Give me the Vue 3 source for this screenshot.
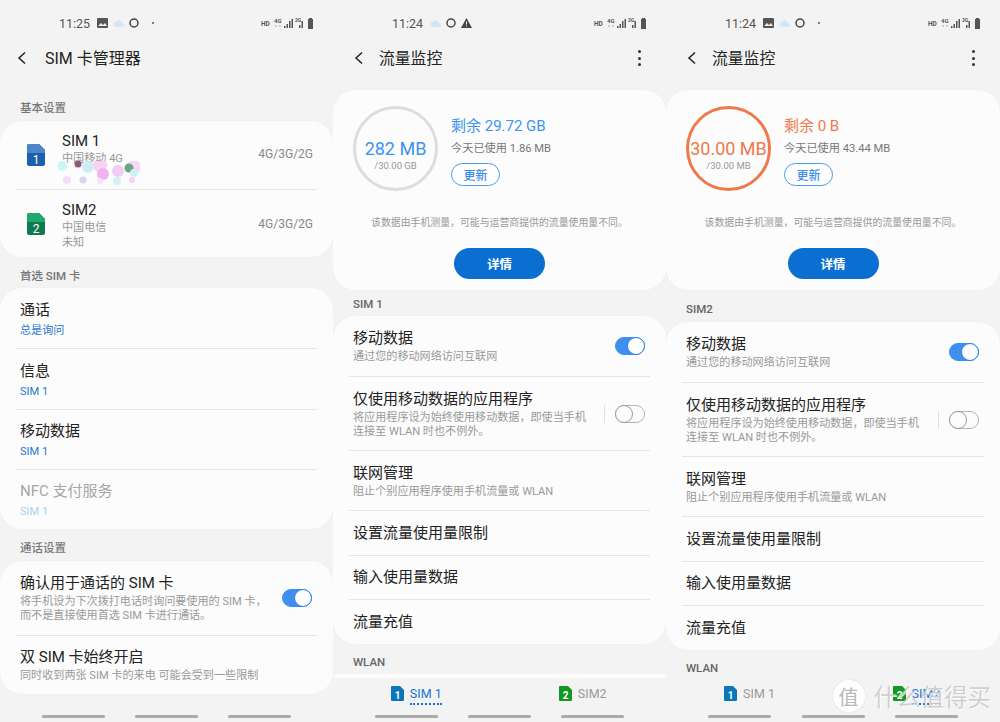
<script setup>
const monitors = [
  {
    time: '11:24', warn: true, sim: 'SIM 1', tall: false, used: '282 MB', total: '/30.00 GB',
    left: '剩余 29.72 GB', today: '今天已使用 1.86 MB', over: false, activeTab: 0
  },
  {
    time: '11:24', warn: false, sim: 'SIM2', tall: true, used: '30.00 MB', total: '/30.00 MB',
    left: '剩余 0 B', today: '今天已使用 43.44 MB', over: true, activeTab: 1
  }
]

const preferred = [
  { title: '通话', sub: '总是询问' },
  { title: '信息', sub: 'SIM 1' },
  { title: '移动数据', sub: 'SIM 1' },
  { title: 'NFC 支付服务', sub: 'SIM 1', disabled: true }
]

const blobs = [
  { cx: 4, cy: 5, r: 5, fill: '#c9f5f7' }, { cx: 30, cy: 6, r: 6, fill: '#cdeef5' },
  { cx: 20, cy: 3, r: 3.500, fill: '#8d5a78' }, { cx: 42, cy: 4, r: 7, fill: '#fbd0f3' },
  { cx: 45, cy: 13, r: 6, fill: '#eeb6f0' }, { cx: 60, cy: 10, r: 6, fill: '#f0ccf2' },
  { cx: 76, cy: 6, r: 7, fill: '#fbd6f5' }, { cx: 71, cy: 7, r: 4.500, fill: '#6ba583' },
  { cx: 76, cy: 12, r: 4, fill: '#cbf2f5' }, { cx: 9, cy: 19, r: 4, fill: '#fbdcf5' },
  { cx: 25, cy: 19, r: 3.500, fill: '#d5d5f5' }, { cx: 42, cy: 20, r: 3, fill: '#f3e4f5' },
  { cx: 59, cy: 20, r: 4, fill: '#d3f0f5' }, { cx: 74, cy: 19, r: 3, fill: '#f9d0f0' }
]
</script>

<template>
  <div class="screen">
    <section class="phone">
      <div class="status">
        <span class="time">11:25</span>
        <svg class="ico" width="11" height="10" viewBox="0 0 11 10"><rect width="11" height="10" rx="1" fill="#555" /><path d="M1 8l3-3 2 2 2-2 2 3z" fill="#eee" /></svg>
        <svg class="ico" width="11" height="7" viewBox="0 0 11 7"><path d="M3 7a2.5 2.5 0 0 1 0-5 3.2 3.2 0 0 1 6 1.200a1.900 1.900 0 0 1 0 3.800z" fill="#d3e6f5" /></svg>
        <svg class="ico" width="10" height="10" viewBox="0 0 10 10"><circle cx="5" cy="5" r="4" fill="none" stroke="#444" stroke-width="1.500" /></svg>
        <i class="dot"></i>
        <svg class="signals" width="55" height="14" viewBox="0 0 55 14">
          <text x="0" y="9.500" font-size="6.500" font-weight="700" fill="#555" font-family="Roboto">HD</text>
          <text x="13" y="6.500" font-size="6" font-weight="700" fill="#555" font-family="Roboto">4G</text>
          <path d="M14 10h2M18 10h2" stroke="#aaa" />
          <path d="M23 12h1.500v-2H23zM25.500 12H27V8h-1.500zM28 12h1.500V5H28zM30.500 12H32V3h-1.500z" fill="#555" />
          <text x="34" y="6" font-size="5" font-weight="700" fill="#555" font-family="Roboto">2G</text>
          <path d="M38 12h1.500V9H38zM40.500 12H42V5h-1.500z" fill="#555" />
          <path d="M47 3h1V2h3v1h1v10h-5z" fill="#555" />
        </svg>
      </div>
      <div class="header">
        <svg class="back" width="10" height="14" viewBox="0 0 10 14"><path d="M8 1.500L2 7l6 5.500" fill="none" stroke="#222" stroke-width="1.500" /></svg>
        <h1 class="title">SIM 卡管理器</h1>
      </div>

      <h2 class="section first">基本设置</h2>
      <div class="card">
        <div class="sim-row">
          <svg class="sim-icon" width="18" height="22" viewBox="0 0 18 22"><path d="M2 0h10l6 6v14a2 2 0 0 1-2 2H2a2 2 0 0 1-2-2V2a2 2 0 0 1 2-2z" fill="#1b5fae" /><path d="M2 0h10l6 6v3H0V2a2 2 0 0 1 2-2z" fill="#4a86c8" /><text x="9" y="19.500" text-anchor="middle" font-size="12" fill="#fff" font-family="Roboto">1</text></svg>
          <div class="sim-text">
            <div class="row-title">SIM 1</div>
            <div class="row-sub">中国移动 4G</div>
          </div>
          <span class="sim-net">4G/3G/2G</span>
          <svg class="blobs" width="82" height="24" viewBox="0 0 82 24"><circle v-for="(b, i) in blobs" :key="i" :cx="b.cx" :cy="b.cy" :r="b.r" :fill="b.fill" /></svg>
        </div>
        <div class="sim-row">
          <svg class="sim-icon" width="18" height="22" viewBox="0 0 18 22"><path d="M2 0h10l6 6v14a2 2 0 0 1-2 2H2a2 2 0 0 1-2-2V2a2 2 0 0 1 2-2z" fill="#0f7a50" /><path d="M2 0h10l6 6v3H0V2a2 2 0 0 1 2-2z" fill="#22a76c" /><text x="9" y="19.500" text-anchor="middle" font-size="12" fill="#fff" font-family="Roboto">2</text></svg>
          <div class="sim-text">
            <div class="row-title">SIM2</div>
            <div class="row-sub">中国电信</div>
            <div class="row-sub">未知</div>
          </div>
          <span class="sim-net">4G/3G/2G</span>
        </div>
      </div>

      <h2 class="section pref">首选 SIM 卡</h2>
      <div class="card">
        <div v-for="item in preferred" :key="item.title" class="row pref-row" :class="{ disabled: item.disabled }">
          <div class="row-title">{{ item.title }}</div>
          <div class="row-sub accent">{{ item.sub }}</div>
        </div>
      </div>

      <h2 class="section pref call">通话设置</h2>
      <div class="card">
        <div class="row tall">
          <div class="row-body">
            <div class="row-title">确认用于通话的 SIM 卡</div>
            <div class="row-sub">将手机设为下次拨打电话时询问要使用的 SIM 卡，<br />而不是直接使用首选 SIM 卡进行通话。</div>
          </div>
          <span class="toggle on"></span>
        </div>
        <div class="row normal compact">
          <div class="row-title">双 SIM 卡始终开启</div>
          <div class="row-sub">同时收到两张 SIM 卡的来电 可能会受到一些限制</div>
        </div>
      </div>

      <div class="navbar"><i></i><i></i><i></i></div>
    </section>

    <section v-for="m in monitors" :key="m.sim" class="phone">
      <div class="status">
        <span class="time">{{ m.time }}</span>
        <svg v-if="!m.warn" class="ico" width="11" height="10" viewBox="0 0 11 10"><rect width="11" height="10" rx="1" fill="#555" /><path d="M1 8l3-3 2 2 2-2 2 3z" fill="#eee" /></svg>
        <svg class="ico" width="11" height="7" viewBox="0 0 11 7"><path d="M3 7a2.5 2.5 0 0 1 0-5 3.2 3.2 0 0 1 6 1.200a1.900 1.900 0 0 1 0 3.800z" fill="#d3e6f5" /></svg>
        <svg class="ico" width="10" height="10" viewBox="0 0 10 10"><circle cx="5" cy="5" r="4" fill="none" stroke="#444" stroke-width="1.500" /></svg>
        <svg v-if="m.warn" class="ico" width="11" height="10" viewBox="0 0 11 10"><path d="M5.500 0L11 10H0z" fill="#444" /><path d="M5.500 3.500v3M5.500 7.500v1" stroke="#eee" /></svg>
        <i v-else class="dot"></i>
        <svg class="signals" width="55" height="14" viewBox="0 0 55 14">
          <text x="0" y="9.500" font-size="6.500" font-weight="700" fill="#555" font-family="Roboto">HD</text>
          <text x="13" y="6.500" font-size="6" font-weight="700" fill="#555" font-family="Roboto">4G</text>
          <path d="M14 10h2M18 10h2" stroke="#aaa" />
          <path d="M23 12h1.500v-2H23zM25.500 12H27V8h-1.500zM28 12h1.500V5H28zM30.500 12H32V3h-1.500z" fill="#555" />
          <text x="34" y="6" font-size="5" font-weight="700" fill="#555" font-family="Roboto">2G</text>
          <path d="M38 12h1.500V9H38zM40.500 12H42V5h-1.500z" fill="#555" />
          <path d="M47 3h1V2h3v1h1v10h-5z" fill="#555" />
        </svg>
      </div>
      <div class="header inset">
        <svg class="back" width="10" height="14" viewBox="0 0 10 14"><path d="M8 1.500L2 7l6 5.500" fill="none" stroke="#222" stroke-width="1.500" /></svg>
        <h1 class="title">流量监控</h1>
        <span class="kebab"><i></i><i></i><i></i></span>
      </div>

      <div class="card summary">
        <div class="usage">
          <div class="ring" :class="{ over: m.over }">
            <span class="ring-value">{{ m.used }}</span>
            <span class="ring-total">{{ m.total }}</span>
          </div>
          <div class="usage-info">
            <div class="remain" :class="{ over: m.over }">{{ m.left }}</div>
            <div class="today">{{ m.today }}</div>
            <button class="refresh">更新</button>
          </div>
        </div>
        <p class="note">该数据由手机测量，可能与运营商提供的流量使用量不同。</p>
        <button class="details">详情</button>
      </div>

      <h2 class="section sim-label" :class="{ lower: m.tall }">{{ m.sim }}</h2>
      <div class="card">
        <div class="row normal switchable">
          <div class="row-body">
            <div class="row-title">移动数据</div>
            <div class="row-sub">通过您的移动网络访问互联网</div>
          </div>
          <span class="toggle on"></span>
        </div>
        <div class="row tall switchable">
          <div class="row-body">
            <div class="row-title">仅使用移动数据的应用程序</div>
            <div class="row-sub">将应用程序设为始终使用移动数据，即使当手机<br />连接至 WLAN 时也不例外。</div>
          </div>
          <i class="vline"></i>
          <span class="toggle"></span>
        </div>
        <div class="row normal">
          <div class="row-title">联网管理</div>
          <div class="row-sub">阻止个别应用程序使用手机流量或 WLAN</div>
        </div>
        <div class="row single"><div class="row-title">设置流量使用量限制</div></div>
        <div class="row single"><div class="row-title">输入使用量数据</div></div>
        <div class="row single"><div class="row-title">流量充值</div></div>
      </div>

      <h2 class="section wlan">WLAN</h2>
      <div v-if="!m.tall" class="stub"></div>

      <div class="tabs">
        <div class="tab" :class="{ active: m.activeTab === 0 }">
          <svg width="13" height="15" viewBox="0 0 13 15"><path d="M1 0h8l4 4v10a1 1 0 0 1-1 1H1a1 1 0 0 1-1-1V1a1 1 0 0 1 1-1z" fill="#0c77b8" /><text x="6.500" y="12.500" text-anchor="middle" font-size="10" font-weight="700" fill="#fff" font-family="Roboto">1</text></svg>
          <span>SIM 1</span>
        </div>
        <div class="tab" :class="{ active: m.activeTab === 1 }">
          <svg width="13" height="15" viewBox="0 0 13 15"><path d="M1 0h8l4 4v10a1 1 0 0 1-1 1H1a1 1 0 0 1-1-1V1a1 1 0 0 1 1-1z" fill="#0f9a1f" /><text x="6.500" y="12.500" text-anchor="middle" font-size="10" font-weight="700" fill="#fff" font-family="Roboto">2</text></svg>
          <span>SIM2</span>
        </div>
      </div>
      <div class="navbar"><i></i><i></i><i></i></div>
    </section>

    <div class="watermark">
      <span class="wm-badge">值</span>
      <span class="wm-text">什么值得买</span>
    </div>
  </div>
</template>

<style scoped>
.screen {
  position: relative;
  display: grid;
  grid-template-columns: 333px 333px 334px;
  width: 1000px;
  height: 722px;
  overflow: hidden;
  background: #f3f3f3;
  color: #222;
  font-family: "Roboto", "Noto Sans CJK SC", sans-serif;
}

.phone {
  position: relative;
  display: flex;
  flex-direction: column;
  height: 722px;
  overflow: hidden;
}

.status {
  display: flex;
  align-items: center;
  height: 46px;
  padding: 0 17px 0 59px;
  box-sizing: border-box;
  gap: 5px;
}

.time {
  margin-right: 2px;
  font-size: 12.500px;
  color: #555;
}

.ico {
  flex: none;
}

.dot {
  width: 2px;
  height: 2px;
  margin-left: 8px;
  border-radius: 50%;
  background: #555;
}

.signals {
  margin-left: auto;
}

.header {
  position: relative;
  display: flex;
  align-items: center;
  height: 24px;
  padding-left: 17px;
}

.header.inset {
  padding-left: 21px;
}

.title {
  margin: 0 0 2px 18px;
  font-size: 16px;
  font-weight: 400;
  color: #222;
}

.header.inset .title {
  margin-left: 15px;
  font-size: 15.800px;
}

.kebab {
  display: flex;
  flex-direction: column;
  gap: 3.500px;
  margin-left: auto;
  margin-right: 25px;
}

.kebab i {
  width: 3px;
  height: 3px;
  border-radius: 50%;
  background: #333;
}

.card {
  flex: none;
  background: #fcfcfc;
  border-radius: 22px;
  box-shadow: 0 0 2px rgba(0, 0, 0, 0.04);
}

.section {
  margin: 0;
  padding-left: 20px;
  font-size: 11.500px;
  font-weight: 500;
  line-height: 16px;
  color: #777;
}

.section.first {
  margin-top: 30px;
  margin-bottom: 5px;
}

.section.pref {
  margin-top: 11px;
  margin-bottom: 4px;
}

.section.pref.call {
  margin-bottom: 5px;
}

.sim-label {
  margin-top: 6px;
  margin-bottom: 4px;
  color: #666;
}

.sim-label.lower {
  margin-top: 11px;
  margin-bottom: 5px;
}

.wlan {
  margin-top: 10px;
  margin-bottom: 4px;
  color: #666;
}

.stub {
  height: 4px;
  margin-top: 0;
  background: #fcfcfc;
  border-radius: 22px 22px 0 0;
}

.sim-row {
  position: relative;
  display: flex;
  align-items: flex-start;
  height: 68px;
  margin: 0 16px;
  box-sizing: border-box;
}

.sim-row + .sim-row {
  border-top: 1px solid #e6e6e6;
}

.sim-icon {
  flex: none;
  margin: 23px 17px 0 11px;
}

.sim-text {
  flex: 1;
  padding-top: 10px;
}

.sim-row + .sim-row .sim-text {
  padding-top: 10px;
}

.sim-row .row-sub {
  line-height: 14.500px;
}

.sim-row .row-title + .row-sub {
  margin-top: 1px;
}

.sim-net {
  margin-top: 26px;
  margin-right: 4px;
  font-size: 12px;
  color: #888;
}

.sim-row + .sim-row .sim-net {
  margin-top: 27px;
}

.blobs {
  position: absolute;
  left: 42px;
  top: 40px;
}

.row {
  display: flex;
  flex-direction: column;
  justify-content: center;
  margin: 0 16px;
  padding: 0 4px;
  box-sizing: border-box;
}

.row + .row {
  border-top: 1px solid #e6e6e6;
}

.row-title {
  font-size: 15px;
  line-height: 20px;
  color: #222;
}

.row-sub {
  font-size: 11.100px;
  line-height: 14px;
  color: #999;
}

.accent {
  margin-top: 4px;
  color: #1f78d1;
}

.pref-row {
  height: 60.250px;
  padding-top: 2px;
}

.disabled .row-title {
  color: #a6a6a6;
}

.disabled .accent {
  color: #a9d2f2;
}

.normal {
  height: 60px;
}

.normal .row-sub {
  margin-top: 2px;
}

.compact {
  height: 59px;
}

.tall {
  height: 74px;
}

.switchable,
.tall {
  flex-direction: row;
  align-items: center;
  justify-content: flex-start;
}

.row-body {
  flex: 1;
}

.tall .row-sub {
  margin-top: 2px;
  white-space: nowrap;
}

.single {
  height: 44.500px;
}

.toggle {
  position: relative;
  flex: none;
  width: 30px;
  height: 18px;
  margin-right: 1px;
  box-sizing: border-box;
  border: 1px solid #b3b3b3;
  border-radius: 9px;
}

.toggle::after {
  content: "";
  position: absolute;
  left: -1px;
  top: -1px;
  width: 18px;
  height: 18px;
  box-sizing: border-box;
  border: 1px solid #9a9a9a;
  border-radius: 50%;
  background: #fcfcfc;
}

.toggle.on {
  border-color: #3f8ff0;
  background: #3f8ff0;
}

.toggle.on::after {
  left: auto;
  right: -1px;
  border: 1.500px solid #2a80e6;
  background: #fff;
}

.vline {
  flex: none;
  width: 1px;
  height: 18px;
  margin-right: 10px;
  background: #e2e2e2;
}

.summary {
  display: flex;
  flex-direction: column;
  align-items: center;
  height: 200px;
  margin-top: 20px;
  box-sizing: border-box;
  padding-top: 16px;
}

.usage {
  display: flex;
  align-self: stretch;
  padding-left: 20px;
}

.ring {
  display: flex;
  flex: none;
  flex-direction: column;
  align-items: center;
  justify-content: center;
  width: 85px;
  height: 85px;
  box-sizing: border-box;
  padding-top: 12px;
  border: 3px solid #dddddd;
  border-radius: 50%;
  white-space: nowrap;
}

.ring.over {
  border-color: #ee7a4c;
}

.ring-value {
  font-size: 18px;
  line-height: 22px;
  color: #3b93f0;
}

.ring.over .ring-value {
  color: #ee7a4c;
}

.ring-total {
  font-size: 9.500px;
  line-height: 12px;
  color: #999;
}

.usage-info {
  display: flex;
  flex-direction: column;
  align-items: flex-start;
  padding: 10px 0 0 13px;
}

.remain {
  font-size: 15px;
  line-height: 20px;
  color: #3d96f2;
}

.remain.over {
  color: #ee7a4c;
}

.today {
  margin-top: 5px;
  font-size: 11.200px;
  line-height: 16px;
  color: #777;
}

.refresh {
  width: 49px;
  height: 23px;
  margin-top: 6px;
  padding: 0;
  background: #fff;
  border: 1px solid #4a9bed;
  border-radius: 12px;
  font-family: inherit;
  font-size: 12px;
  font-weight: 500;
  color: #3d8ee6;
}

.note {
  margin: 25px 0 0;
  font-size: 9.900px;
  line-height: 14px;
  color: #999;
}

.details {
  width: 91px;
  height: 31px;
  margin-top: 18px;
  padding: 0;
  background: #0a6fd0;
  border: none;
  border-radius: 16px;
  font-family: inherit;
  font-size: 12.500px;
  font-weight: 700;
  color: #fff;
}

.tabs {
  display: grid;
  grid-template-columns: 1fr 1fr;
  margin-top: auto;
  height: 30px;
  padding-top: 1px;
  box-sizing: border-box;
  background: #f3f3f3;
}

.tab {
  display: flex;
  align-items: flex-start;
  justify-content: center;
  gap: 6px;
  font-size: 12.500px;
  line-height: 15px;
  color: #999;
}

.tab span {
  padding-bottom: 2px;
}

.tab.active span {
  color: #1273d8;
  border-bottom: 2px dotted #1273d8;
}

.navbar {
  display: flex;
  flex: none;
  justify-content: space-between;
  margin-top: auto;
  padding: 0 42px;
  height: 7px;
}

.tabs + .navbar {
  margin-top: 0;
}

.navbar i {
  width: 63px;
  height: 3px;
  border-radius: 2px;
  background: #ababab;
}

.watermark {
  position: absolute;
  right: 9px;
  top: 679px;
  display: flex;
  align-items: center;
  gap: 9px;
  pointer-events: none;
}

.wm-badge {
  display: flex;
  align-items: center;
  justify-content: center;
  width: 32px;
  height: 32px;
  border-radius: 50%;
  background: rgba(255, 255, 255, 0.9);
  box-shadow: 0 0 2px rgba(0, 0, 0, 0.12);
  font-size: 20px;
  color: #b8b8b8;
}

.wm-text {
  font-size: 23.500px;
  color: rgba(200, 200, 200, 0.85);
  text-shadow: 1px 1px 0 rgba(255, 255, 255, 0.8);
}
</style>

<style>
html,
body {
  margin: 0;
  background: #f3f3f3;
}
</style>
